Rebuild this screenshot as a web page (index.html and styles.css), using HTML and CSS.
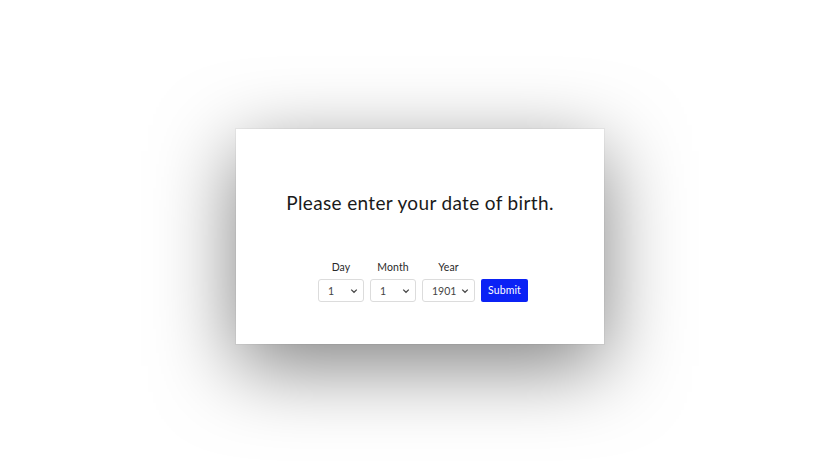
FILE: index.html
```html
<!DOCTYPE html>
<html>
<head>
<meta charset="utf-8">
<link rel="stylesheet" href="styles.css">
</head>
<body>
<div class="stage">
  <div class="modal">
    <h1 class="title">Please enter your date of birth.</h1>
    <form class="dob">
      <div class="field">
        <label class="label">Day</label>
        <div class="select-wrap day">
          <select class="select"><option>1</option></select>
          <svg class="chev" width="8" height="6" viewBox="0 0 8 6"><path d="M1.2 1.6 L4 4.3 L6.8 1.6" fill="none" stroke="#444" stroke-width="1.2"/></svg>
        </div>
      </div>
      <div class="field">
        <label class="label">Month</label>
        <div class="select-wrap month">
          <select class="select"><option>1</option></select>
          <svg class="chev" width="8" height="6" viewBox="0 0 8 6"><path d="M1.2 1.6 L4 4.3 L6.8 1.6" fill="none" stroke="#444" stroke-width="1.2"/></svg>
        </div>
      </div>
      <div class="field">
        <label class="label">Year</label>
        <div class="select-wrap year">
          <select class="select"><option>1901</option></select>
          <svg class="chev" width="8" height="6" viewBox="0 0 8 6"><path d="M1.2 1.6 L4 4.3 L6.8 1.6" fill="none" stroke="#444" stroke-width="1.2"/></svg>
        </div>
      </div>
      <button type="button" class="submit">Submit</button>
    </form>
  </div>
</div>
</body>
</html>
```

FILE: styles.css
```css
html, body {
  margin: 0;
  padding: 0;
  background: #fff;
}
body {
  font-family: "Lato", "Liberation Sans", sans-serif;
  color: #1e1e1e;
}
.stage {
  width: 840px;
  height: 472px;
  display: flex;
  align-items: center;
  justify-content: center;
}
.modal {
  width: 368px;
  height: 215px;
  box-sizing: border-box;
  background: #fff;
  box-shadow: 0 0 0 1px rgba(0, 0, 0, 0.04), 0 22px 80px rgba(0, 0, 0, 0.5);
  padding-top: 61px;
  display: flex;
  flex-direction: column;
  align-items: center;
}
.title {
  margin: 0;
  font-size: 19px;
  font-weight: 400;
  line-height: 26px;
  letter-spacing: 0.35px;
  color: #1a1a1a;
}
.dob {
  margin-top: 44px;
  display: flex;
  align-items: flex-end;
  gap: 6px;
  margin-left: 6px;
}
.field {
  display: flex;
  flex-direction: column;
  align-items: center;
  gap: 5px;
}
.label {
  font-size: 10.5px;
  line-height: 14px;
  color: #2a2a2a;
  letter-spacing: 0.1px;
}
.select-wrap {
  position: relative;
  height: 23px;
}
.select-wrap.day, .select-wrap.month { width: 46px; }
.select-wrap.year { width: 53px; }
.select {
  appearance: none;
  -webkit-appearance: none;
  width: 100%;
  height: 100%;
  box-sizing: border-box;
  border: 1px solid #dcdcdc;
  border-radius: 3px;
  background: #fff;
  font-family: inherit;
  font-size: 10.5px;
  color: #444;
  padding: 0 0 0 9px;
  margin: 0;
}
.chev {
  position: absolute;
  right: 6px;
  top: 9px;
  pointer-events: none;
}
.submit {
  height: 23px;
  width: 47px;
  border: none;
  border-radius: 2px;
  background: #0b22f5;
  color: #fff;
  font-family: inherit;
  font-size: 10.5px;
  padding: 0;
  letter-spacing: 0.1px;
}
```
